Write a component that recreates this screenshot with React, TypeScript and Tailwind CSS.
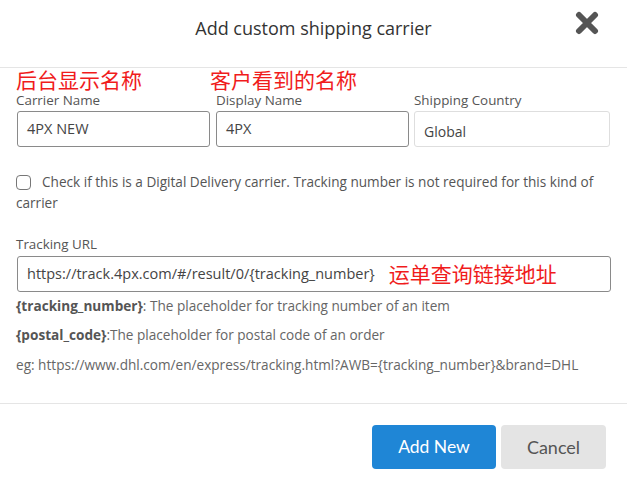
import React from "react";

const font = { fontFamily: '"Open Sans", "Noto Sans CJK SC", sans-serif' };
const cjk = { fontFamily: '"Noto Sans CJK SC", sans-serif' };

export default function App() {
  return (
    <div className="w-[627px] h-[482px] bg-white text-[#555] overflow-hidden" style={font}>
      {/* header */}
      <div className="relative h-[68px] border-b border-[#e5e5e5] flex items-center justify-center">
        <h1 className="text-[18px] text-[#333] mb-[11px]">Add custom shipping carrier</h1>
        <button className="absolute right-[28px] top-[11px] w-[24px] h-[24px] flex items-center justify-center">
          <svg width="24" height="24" viewBox="0 0 24 24">
            <path d="M4 4 L20 20 M20 4 L4 20" stroke="#555" strokeWidth="6" strokeLinecap="round" />
          </svg>
        </button>
      </div>

      {/* body */}
      <div className="px-[16px]">
        <div className="flex">
          <div className="flex flex-col w-[200px]">
            <div className="text-[#f01c1c] text-[21px] leading-[22px] h-[22px]" style={cjk}>后台显示名称</div>
            <label className="text-[13.4px] leading-[18px] mt-[1px]">Carrier Name</label>
            <div className="mt-[2px] ml-[1px] w-[193px] h-[36px] border border-[#8a8a8a] rounded-[3px] flex items-center px-[9px] text-[14.5px] text-[#444]">4PX NEW</div>
          </div>
          <div className="flex flex-col w-[198px]">
            <div className="text-[#f01c1c] text-[21px] leading-[22px] h-[22px] ml-[-6px]" style={cjk}>客户看到的名称</div>
            <label className="text-[13.4px] leading-[18px] mt-[1px]">Display Name</label>
            <div className="mt-[2px] w-[193px] h-[36px] border border-[#8a8a8a] rounded-[3px] flex items-center px-[9px] text-[14.5px] text-[#444]">4PX</div>
          </div>
          <div className="flex flex-col w-[196px]">
            <div className="h-[22px]" />
            <label className="text-[13.4px] leading-[18px] mt-[1px]">Shipping Country</label>
            <div className="mt-[2px] h-[36px] border border-[#dedede] rounded-[3px] flex items-center pt-[5px] px-[9px] text-[14px] text-[#444]">Global</div>
          </div>
        </div>

        <div className="mt-[24px] pr-[10px] text-[13.6px] leading-[21px]">
          <span className="inline-block align-[-3px] w-[15px] h-[15px] border border-[#777] rounded-[4px] mr-[11px]" />
          Check if this is a Digital Delivery carrier. Tracking number is not required for this kind of carrier
        </div>

        <div className="mt-[22px] text-[13.4px] leading-[18px]">Tracking URL</div>
        <div className="mt-[3px] ml-[1px] h-[36px] border border-[#8a8a8a] rounded-[3px] flex items-center px-[9px] text-[14.5px] text-[#444]">
          <span>https://track.4px.com/#/result/0/&#123;tracking_number&#125;</span>
          <span className="ml-[14px] text-[#f01c1c] text-[21px]" style={cjk}>运单查询链接地址</span>
        </div>

        <div className="mt-[5px] text-[13.6px] leading-[18px] text-[#666]">
          <b className="font-bold text-[#555]">&#123;tracking_number&#125;</b>: The placeholder for tracking number of an item
        </div>
        <div className="mt-[11px] text-[13.6px] leading-[18px] text-[#666]">
          <b className="font-bold text-[#555]">&#123;postal_code&#125;</b>:The placeholder for postal code of an order
        </div>
        <div className="mt-[12px] text-[13.6px] leading-[18px] text-[#666]">
          eg: https://www.dhl.com/en/express/tracking.html?AWB=&#123;tracking_number&#125;&amp;brand=DHL
        </div>
      </div>

      {/* footer */}
      <div className="mt-[29px] border-t border-[#e5e5e5] flex justify-end gap-[5px] pt-[21px] pr-[21px]">
        <button className="w-[124px] h-[44px] rounded-[4px] bg-[#1f86d6] text-white text-[17.5px]" style={{ fontFamily: 'Lato, sans-serif' }}>Add New</button>
        <button className="w-[105px] h-[44px] rounded-[4px] bg-[#e4e4e4] text-[#555] text-[18px]" style={{ fontFamily: 'Lato, sans-serif' }}>Cancel</button>
      </div>
    </div>
  );
}
